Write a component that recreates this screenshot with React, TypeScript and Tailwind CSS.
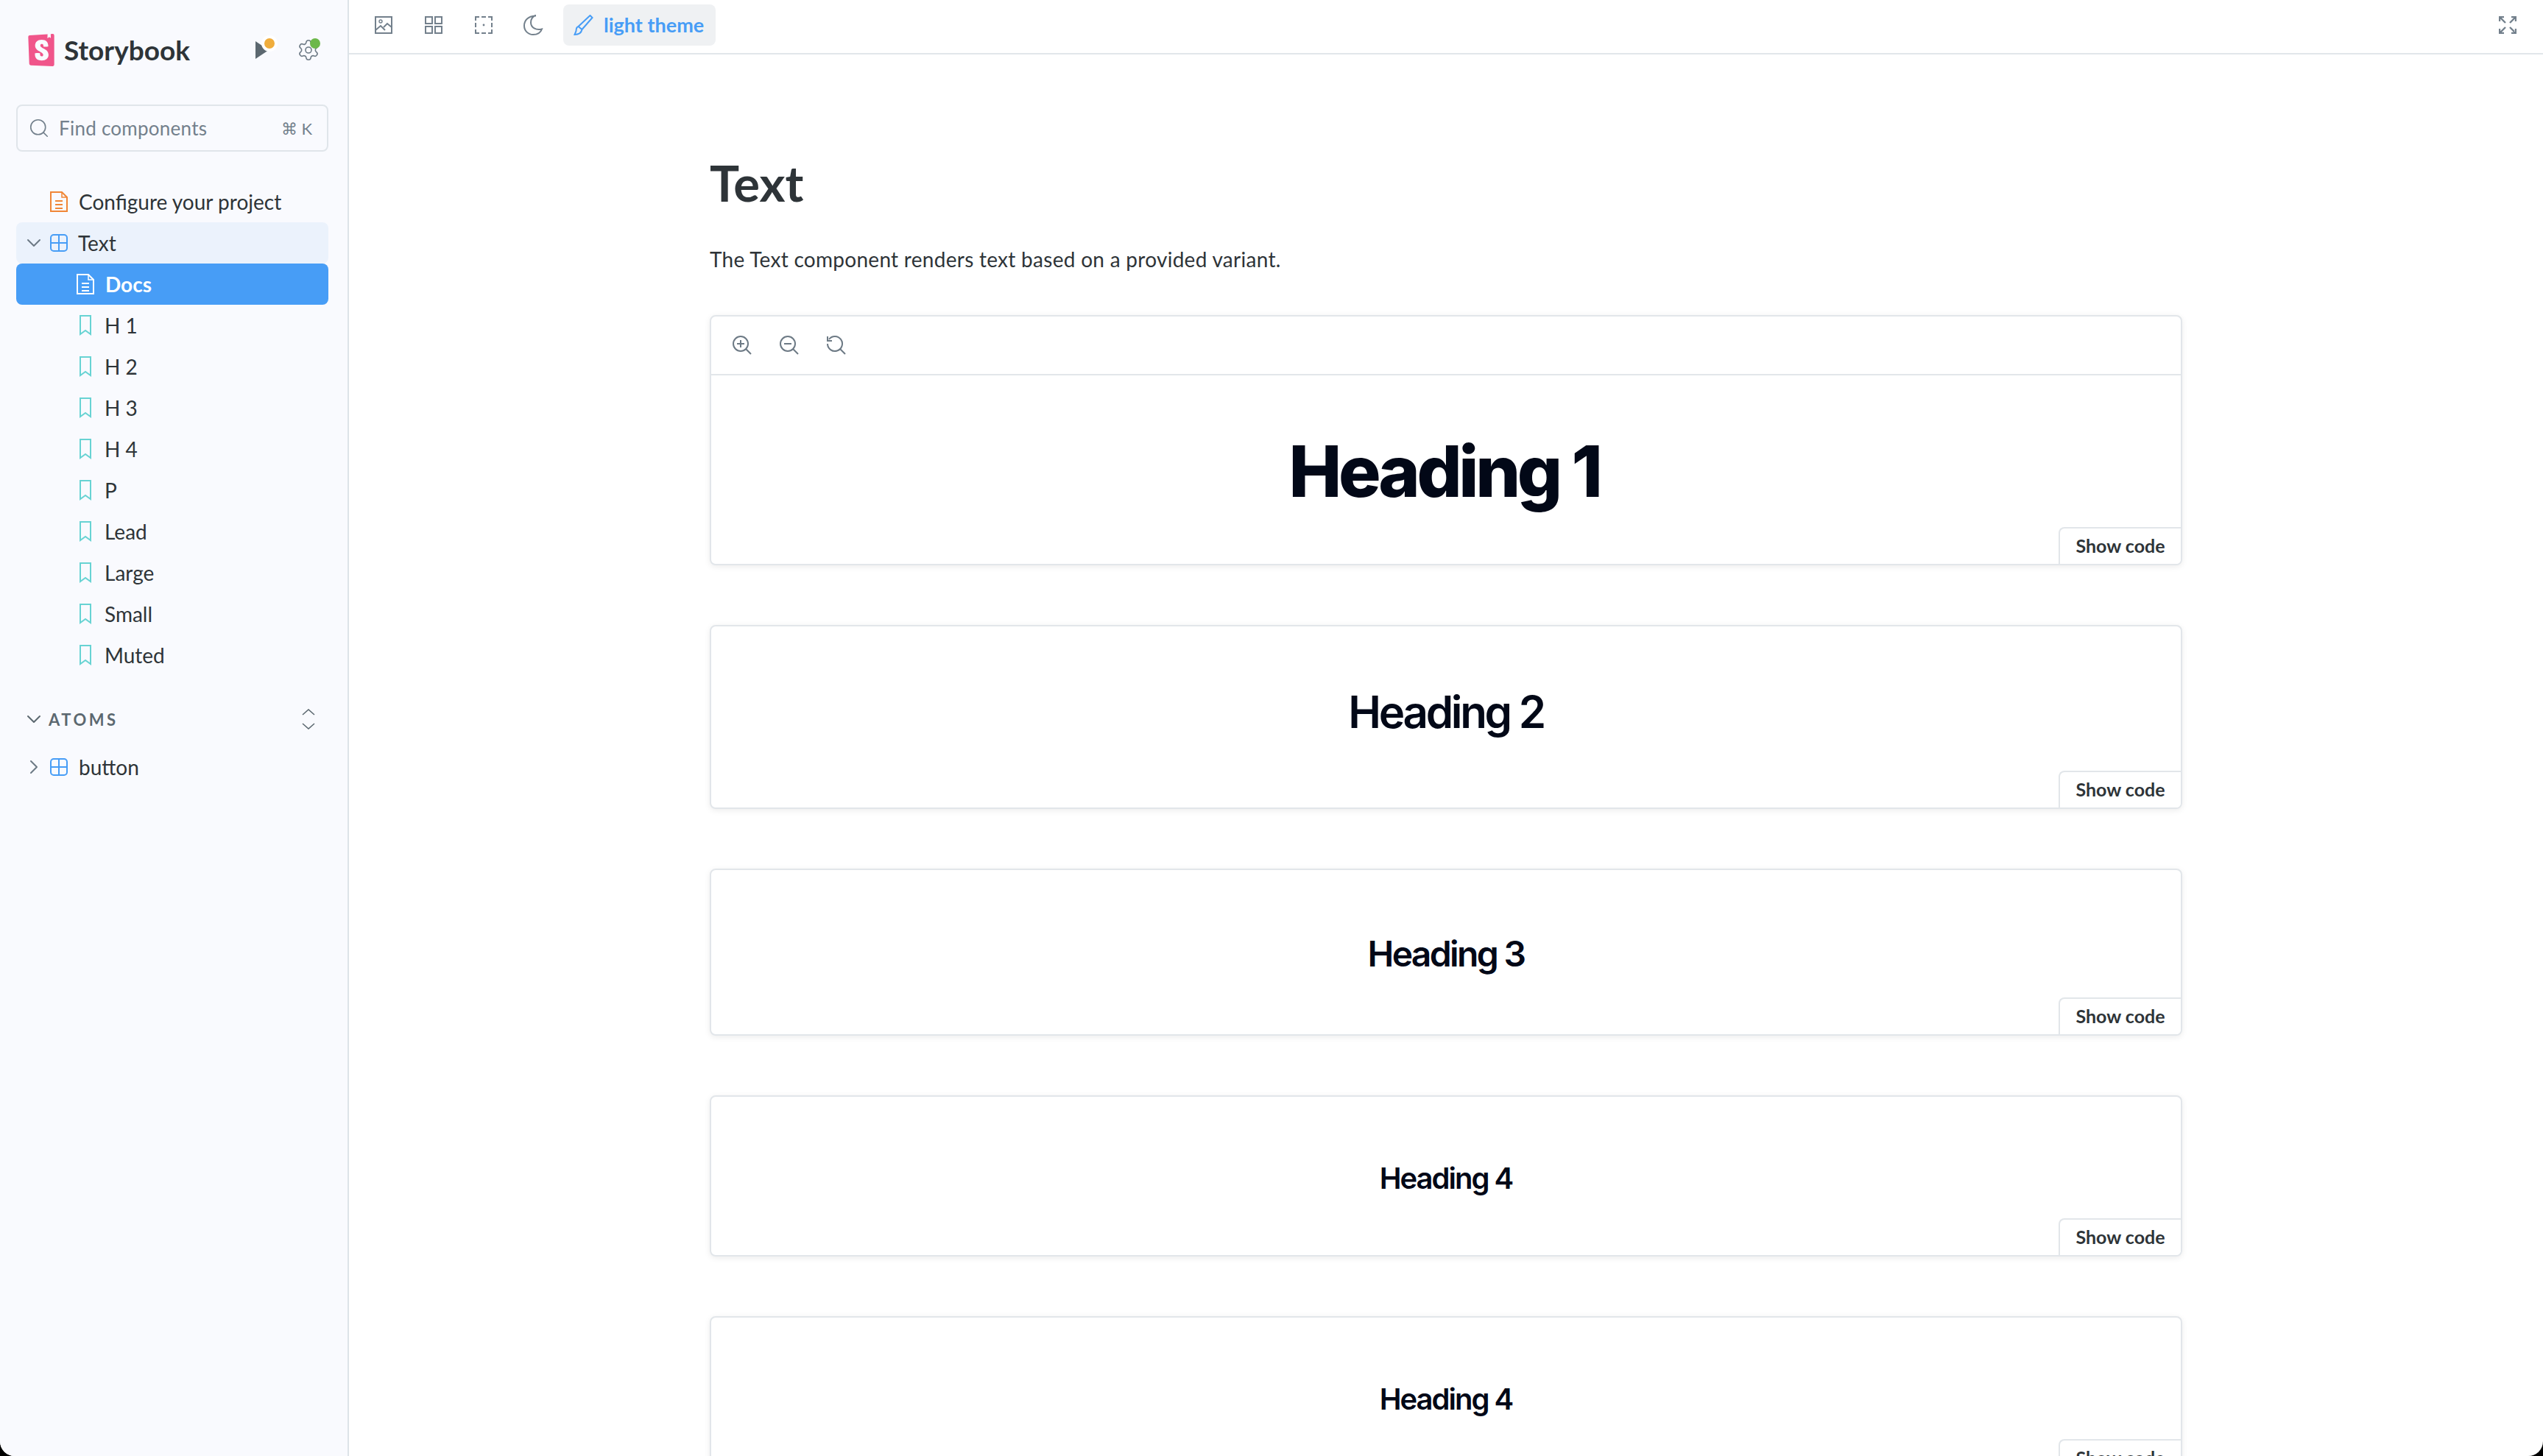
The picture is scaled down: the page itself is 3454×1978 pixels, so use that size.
import type { ReactNode } from 'react'
import { SiStorybook } from 'react-icons/si'
import { Search, Settings, ChevronDown, ChevronRight } from 'lucide-react'

const STORIES = ['H 1', 'H 2', 'H 3', 'H 4', 'P', 'Lead', 'Large', 'Small', 'Muted']

function DocIcon({ className }: { className: string }) {
  return (
    <svg viewBox="0 0 24 28" fill="none" stroke="currentColor" strokeWidth="2" className={className}>
      <path d="M1 1h15l7 7v19H1z" />
      <path d="M16 1v7h7" strokeWidth="1.5" />
      <path d="M7 13h10M7 18h10M7 23h10" />
    </svg>
  )
}

function ComponentIcon({ className }: { className: string }) {
  return (
    <svg viewBox="0 0 24 24" fill="none" stroke="currentColor" strokeWidth="2" className={className}>
      <rect x="1" y="1" width="22" height="22" rx="4" />
      <path d="M12 1v22M1 12h22" />
    </svg>
  )
}

function BookmarkIcon() {
  return (
    <svg viewBox="0 0 16 28" fill="none" stroke="currentColor" strokeWidth="2" className="h-7 w-4 shrink-0 text-[#68d3d3]">
      <path d="M1 1h14v25l-7-5-7 5z" />
    </svg>
  )
}

function TreeRow({ indent, active, hover, children }: { indent: string; active?: boolean; hover?: boolean; children: ReactNode }) {
  return (
    <div
      className={`flex h-14 items-center rounded-lg text-[28px] ${indent} ${active ? 'bg-[#479df6] font-bold text-white' : hover ? 'bg-[#ebf2fc] text-[#2e3438]' : 'text-[#2e3438]'}`}
    >
      {children}
    </div>
  )
}

function Sidebar() {
  return (
    <aside className="flex w-[474px] shrink-0 flex-col border-r-2 border-[#dde3e8] bg-[#f9fafe] pl-[22px] pr-[26px]">
      <div className="mt-[46px] flex h-11 items-center pl-4">
        <SiStorybook className="h-11 w-11 shrink-0 -ml-1 text-[#f0558a]" />
        <span className="ml-[9px] text-[37px] font-bold text-[#2e3438]">Storybook</span>
        <div className="ml-auto mr-[11px] flex items-center gap-[28px]">
          <div className="relative h-7 w-7">
            <svg viewBox="0 0 18 24" className="absolute left-0 top-[2px] h-6 w-[18px] fill-[#5c6870]">
              <path d="M0 0l18 12L0 24z" />
            </svg>
            <span className="absolute -top-[6px] left-[8px] h-[22px] w-[22px] rounded-full border-4 border-white bg-[#f0ad3c]" />
          </div>
          <div className="relative h-8 w-8">
            <Settings className="h-8 w-8 text-[#6d7a85]" strokeWidth={1.2} />
            <span className="absolute right-0 top-0 h-[14px] w-[14px] rounded-full bg-[#6cb84a]" />
          </div>
        </div>
      </div>

      <div className="mt-[52px] flex h-16 items-center rounded-lg border-2 border-[#e0e5ea] pl-[14px] pr-[20px] text-[#73808c]">
        <Search className="h-[30px] w-[30px] shrink-0" strokeWidth={1.3} />
        <span className="ml-[12px] text-[26px] tracking-[0.01em]">Find components</span>
        <span className="ml-auto text-[22px]">⌘ K</span>
      </div>

      <nav className="mt-10 flex flex-col">
        <TreeRow indent="pl-[46px]">
          <DocIcon className="h-7 w-6 shrink-0 text-[#f08636]" />
          <span className="ml-[15px]">Configure your project</span>
        </TreeRow>
        <TreeRow indent="pl-4" hover>
          <ChevronDown className="h-8 w-8 shrink-0 -ml-[8px] text-[#6d7a85]" strokeWidth={1.5} />
          <ComponentIcon className="ml-[6px] h-6 w-6 shrink-0 text-[#479df6]" />
          <span className="ml-[14px]">Text</span>
        </TreeRow>
        <TreeRow indent="pl-[82px]" active>
          <DocIcon className="h-7 w-6 shrink-0 text-white" />
          <span className="ml-[15px]">Docs</span>
        </TreeRow>
        {STORIES.map(s => (
          <TreeRow key={s} indent="pl-[86px]">
            <BookmarkIcon />
            <span className="ml-[18px]">{s}</span>
          </TreeRow>
        ))}

        <div className="mt-[30px] flex h-[58px] items-center pl-4 pr-[18px] text-[#5c6870]">
          <ChevronDown className="h-8 w-8 shrink-0 -ml-[8px]" strokeWidth={1.5} />
          <span className="ml-[4px] text-[22px] font-bold tracking-[0.16em]">ATOMS</span>
          <svg viewBox="0 0 18 28" fill="none" stroke="currentColor" strokeWidth="1.6" className="ml-auto h-7 w-[18px]">
            <path d="M1 8l8-7 8 7M1 20l8 7 8-7" />
          </svg>
        </div>
        <div className="mt-2" />
        <TreeRow indent="pl-4">
          <ChevronRight className="h-8 w-8 shrink-0 -ml-[8px] text-[#6d7a85]" strokeWidth={1.5} />
          <ComponentIcon className="ml-[6px] h-6 w-6 shrink-0 text-[#479df6]" />
          <span className="ml-[15px]">button</span>
        </TreeRow>
      </nav>
    </aside>
  )
}

function ToolIcon({ children }: { children: ReactNode }) {
  return (
    <svg viewBox="0 0 24 24" fill="none" stroke="currentColor" strokeWidth="2" className="h-6 w-6 shrink-0">
      {children}
    </svg>
  )
}

function Toolbar() {
  return (
    <header className="flex h-[74px] shrink-0 items-center border-b-2 border-[#e2e6ea] pb-[4px] pl-[35px] pr-[36px] text-[#73808c]">
      <div className="flex items-center gap-[44px]">
        <ToolIcon>
          <rect x="1" y="1" width="22" height="22" />
          <circle cx="8" cy="7" r="2" strokeWidth="1.4" />
          <path d="M1 19l7-6 6 6M12 15l5-5 6 5" />
        </ToolIcon>
        <ToolIcon>
          <rect x="1" y="1" width="9" height="9" />
          <rect x="14" y="1" width="9" height="9" />
          <rect x="1" y="14" width="9" height="9" />
          <rect x="14" y="14" width="9" height="9" />
        </ToolIcon>
        <ToolIcon>
          <path d="M6 1H1v5M9 1h6M18 1h5v5M23 9v6M23 18v5h-5M15 23H9M6 23H1v-5M1 15V9" />
          <circle cx="12" cy="12" r="1.4" fill="currentColor" stroke="none" />
        </ToolIcon>
        <svg viewBox="0 0 26 28" fill="none" stroke="currentColor" strokeWidth="2" className="-ml-[3px] h-7 w-7 shrink-0">
          <path d="M16 1.500C6 2 1 8 1 15c0 7 5.500 12 12 12 6 0 10.500-3 12-7.500-8 2-15-2-15-9 0-4 2-7.500 6-9.500z" />
        </svg>
      </div>
      <div className="ml-[27px] flex h-14 w-[207px] items-center rounded-lg bg-[#eff1f3] pl-[13px] text-[#479df6]">
        <svg viewBox="0 0 26 28" fill="none" stroke="currentColor" strokeWidth="2" className="h-7 w-[29px] shrink-0">
          <path d="M22 1l3 3-14 16-5-4zM6 16c-3 1-3 4-3 6l-2 5c5 0 9-2 10-7" />
        </svg>
        <span className="ml-[13px] text-[27px] font-bold">light theme</span>
      </div>
      <svg viewBox="0 0 24 24" fill="none" stroke="currentColor" strokeWidth="2.4" className="ml-auto h-6 w-6">
        <path d="M1 1l8 8M1 7V1h6M23 1l-8 8M17 1h6v6M1 23l8-8M1 17v6h6M23 23l-8-8M17 23h6v-6" />
      </svg>
    </header>
  )
}

function ZoomIcon({ children }: { children?: ReactNode }) {
  return (
    <svg viewBox="0 0 26 26" fill="none" stroke="currentColor" strokeWidth="2" className="h-[26px] w-[26px] text-[#6d7a85]">
      <circle cx="11" cy="11" r="10" />
      <path d="M18 18l7 7" />
      {children}
    </svg>
  )
}

function ShowCode() {
  return (
    <button className="absolute bottom-0 right-0 flex h-[50px] w-[166px] items-center justify-center rounded-tl-lg border-l-2 border-t-2 border-[#e2e6ea] bg-white text-[25px] font-bold text-[#2e3438]">
      Show code
    </button>
  )
}

function TextCard({ height, pad, className, text }: { height: string; pad: string; className: string; text: string }) {
  return (
    <section className={`relative shrink-0 overflow-hidden rounded-lg border-2 border-[#e2e6ea] bg-white shadow-[0_2px_8px_rgba(0,0,0,0.08)] ${height}`}>
      <div className={`flex h-full items-center justify-center font-['Inter',sans-serif] text-[#020817] ${pad}`}>
        <h2 className={className}>{text}</h2>
      </div>
      <ShowCode />
    </section>
  )
}

export default function App() {
  return (
    <div className="h-[1978px] w-[3454px] overflow-hidden bg-black font-['Lato',sans-serif]">
      <div className="flex h-full overflow-hidden rounded-b-[20px] bg-white">
        <Sidebar />
        <main className="flex min-w-0 flex-1 flex-col overflow-hidden">
          <Toolbar />
          <div className="mx-auto flex w-[2000px] flex-col">
            <h1 className="mt-[134px] text-[67px] font-bold leading-[80px] text-[#2e3438]">Text</h1>
            <p className="mt-[45px] text-[28px] leading-[38px] tracking-[0.01em] text-[#2e3438]">The Text component renders text based on a provided variant.</p>

            <div className="mt-[57px] flex flex-col gap-[81px]">
              <section className="relative h-[340px] shrink-0 overflow-hidden rounded-lg border-2 border-[#e2e6ea] bg-white shadow-[0_2px_8px_rgba(0,0,0,0.08)]">
                <div className="flex h-[80px] items-center gap-[38px] border-b-2 border-[#e2e6ea] pl-[29px]">
                  <ZoomIcon><path d="M11 6v10M6 11h10" /></ZoomIcon>
                  <ZoomIcon><path d="M6 11h10" /></ZoomIcon>
                  <svg viewBox="0 0 26 26" fill="none" stroke="currentColor" strokeWidth="2" className="h-[26px] w-[26px] text-[#6d7a85]">
                    <path d="M3 5a10 10 0 1 1-2 6M18 18l7 7" />
                    <path d="M1 1v6h6" />
                  </svg>
                </div>
                <div className="flex h-[256px] items-center justify-center pr-[5px] pt-[4px] font-['Inter',sans-serif] text-[#020817]">
                  <h2 className="text-[96px] font-extrabold tracking-[-0.045em]">Heading 1</h2>
                </div>
                <ShowCode />
              </section>
              <TextCard height="h-[250px]" pad="pb-[14px]" className="text-[60px] font-semibold tracking-[-0.055em]" text="Heading 2" />
              <TextCard height="h-[227px]" pad="pt-[4px]" className="text-[48px] font-semibold tracking-[-0.055em]" text="Heading 3" />
              <TextCard height="h-[219px]" pad="pt-[6px]" className="text-[40px] font-semibold tracking-[-0.05em]" text="Heading 4" />
              <TextCard height="h-[219px]" pad="pt-[6px]" className="text-[40px] font-semibold tracking-[-0.05em]" text="Heading 4" />
            </div>
          </div>
        </main>
      </div>
    </div>
  )
}
